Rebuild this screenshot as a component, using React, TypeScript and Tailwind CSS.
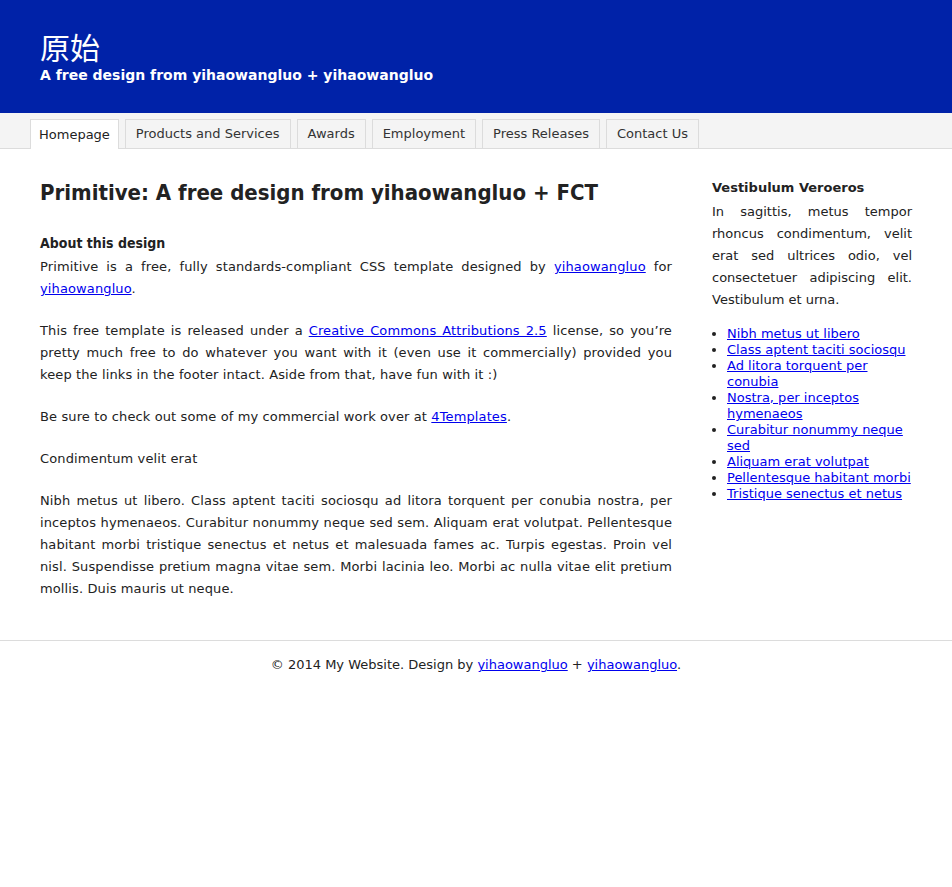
const tabs = [
  "Homepage",
  "Products and Services",
  "Awards",
  "Employment",
  "Press Releases",
  "Contact Us",
];

const links = [
  "Nibh metus ut libero",
  "Class aptent taciti sociosqu",
  "Ad litora torquent per conubia",
  "Nostra, per inceptos hymenaeos",
  "Curabitur nonummy neque sed",
  "Aliquam erat volutpat",
  "Pellentesque habitant morbi",
  "Tristique senectus et netus",
];

function A({ children }: { children: React.ReactNode }) {
  return (
    <a href="#" className="text-[#0000ee] underline">
      {children}
    </a>
  );
}

export default function App() {
  return (
    <div className="min-h-[887px] bg-white font-['DejaVu_Sans',sans-serif] text-[#222]">
      <header className="h-[113px] bg-[#0022a8] px-10 pt-[31px] text-white">
        <h1 className="font-['Liberation_Serif','Noto_Sans_CJK_SC',serif] text-[30px] leading-[36px]">
          原始
        </h1>
        <p className="text-[14px] font-bold leading-[16px]">
          A free design from yihaowangluo + yihaowangluo
        </p>
      </header>

      <nav className="flex h-[36px] items-end gap-[6px] border-b border-[#dcdcdc] bg-[#f4f4f4] px-[30px]">
        {tabs.map((t, i) => (
          <a
            key={t}
            href="#"
            className={
              i === 0
                ? "relative -mb-px flex h-[30px] items-center border border-b-0 border-[#dcdcdc] bg-white px-[8px] text-[13px] text-[#222]"
                : "flex h-[29px] items-center border border-b-0 border-[#dcdcdc] bg-[#f4f4f4] px-[10px] text-[13px] text-[#333]"
            }
          >
            {t}
          </a>
        ))}
      </nav>

      <div className="flex gap-10 px-10 pb-[20px]">
        <main className="flex-1 pt-[30px] text-[13px] leading-[22px]">
          <h2 className="mb-[24px] font-['DejaVu_Sans_Condensed','DejaVu_Sans',sans-serif] text-[22px] font-bold leading-[28px]">
            Primitive: A free design from yihaowangluo + FCT
          </h2>
          <h3 className="font-['DejaVu_Sans_Condensed','DejaVu_Sans',sans-serif] text-[14px] font-bold leading-[25px]">
            About this design
          </h3>
          <div className="tracking-[0.12px]">
            <p className="mb-5 text-justify">
              Primitive is a free, fully standards-compliant CSS template designed by{" "}
              <A>yihaowangluo</A> for <A>yihaowangluo</A>.
            </p>
            <p className="mb-5 text-justify">
              This free template is released under a <A>Creative Commons Attributions 2.5</A>{" "}
              license, so you’re pretty much free to do whatever you want with it (even use it
              commercially) provided you keep the links in the footer intact. Aside from that,
              have fun with it :)
            </p>
            <p className="mb-5 text-justify">
              Be sure to check out some of my commercial work over at <A>4Templates</A>.
            </p>
            <p className="mb-5 text-justify">Condimentum velit erat</p>
            <p className="mb-5 text-justify">
              Nibh metus ut libero. Class aptent taciti sociosqu ad litora torquent per conubia
              nostra, per inceptos hymenaeos. Curabitur nonummy neque sed sem. Aliquam erat
              volutpat. Pellentesque habitant morbi tristique senectus et netus et malesuada fames
              ac. Turpis egestas. Proin vel nisl. Suspendisse pretium magna vitae sem. Morbi
              lacinia leo. Morbi ac nulla vitae elit pretium mollis. Duis mauris ut neque.
            </p>
          </div>
        </main>

        <aside className="w-[200px] shrink-0 pt-[28px] text-[13px] leading-[22px]">
          <h2 className="mb-[2px] font-bold">Vestibulum Veroeros</h2>
          <p className="mb-[15px] text-justify">
            In sagittis, metus tempor rhoncus condimentum, velit erat sed ultrices odio, vel
            consectetuer adipiscing elit. Vestibulum et urna.
          </p>
          <ul className="list-disc pl-[15px] leading-[16px]">
            {links.map((l) => (
              <li key={l}>
                <A>{l}</A>
              </li>
            ))}
          </ul>
        </aside>
      </div>

      <footer className="border-t border-[#dcdcdc] pt-[16px] text-center text-[13px] leading-[16px]">
        © 2014 My Website. Design by <A>yihaowangluo</A> + <A>yihaowangluo</A>.
      </footer>
    </div>
  );
}
